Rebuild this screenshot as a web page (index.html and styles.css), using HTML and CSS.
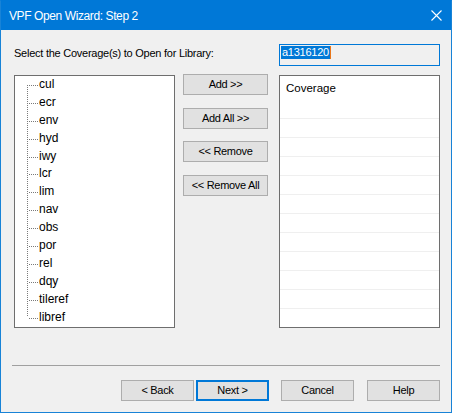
FILE: index.html
```html
<!DOCTYPE html>
<html>
<head>
<meta charset="utf-8">
<link rel="stylesheet" href="styles.css">
</head>
<body>
<div class="window">
  <div class="titlebar">
    <span class="title">VPF Open Wizard: Step 2</span>
    <svg class="close" width="11" height="11" viewBox="0 0 11 11"><path d="M0.5 0.5 L10.5 10.5 M10.5 0.5 L0.5 10.5" stroke="#fff" stroke-width="1.1" fill="none"/></svg>
  </div>
  <div class="content">
    <div class="top-row">
      <span class="label">Select the Coverage(s) to Open for Library:</span>
      <div class="input"><span class="sel">a1316120</span><span class="caret"></span></div>
    </div>
    <div class="main">
      <div class="tree">
        <ul class="tree-list">
          <li>cul</li>
          <li>ecr</li>
          <li>env</li>
          <li>hyd</li>
          <li>iwy</li>
          <li>lcr</li>
          <li>lim</li>
          <li>nav</li>
          <li>obs</li>
          <li>por</li>
          <li>rel</li>
          <li>dqy</li>
          <li>tileref</li>
          <li>libref</li>
        </ul>
      </div>
      <div class="btns">
        <button class="btn">Add &gt;&gt;</button>
        <button class="btn">Add All &gt;&gt;</button>
        <button class="btn">&lt;&lt; Remove</button>
        <button class="btn">&lt;&lt; Remove All</button>
      </div>
      <div class="list">
        <div class="list-head">Coverage</div>
        <div class="row"></div>
        <div class="row"></div>
        <div class="row"></div>
        <div class="row"></div>
        <div class="row"></div>
        <div class="row"></div>
        <div class="row"></div>
        <div class="row"></div>
        <div class="row"></div>
        <div class="row"></div>
        <div class="row"></div>
      </div>
    </div>
    <div class="sep"></div>
    <div class="footer">
      <button class="btn fbtn back">&lt; Back</button>
      <button class="btn fbtn next">Next &gt;</button>
      <button class="btn fbtn cancel">Cancel</button>
      <button class="btn fbtn">Help</button>
    </div>
  </div>
</div>
</body>
</html>
```
FILE: styles.css
```css
body {
  margin: 0;
  background: #ffffff;
  font-family: "Liberation Sans", Arial, sans-serif;
  color: #000;
}

.window {
  width: 452px;
  height: 413px;
  box-sizing: border-box;
  border: 1px solid #1883d7;
  border-top-color: #0078d7;
  background: #f0f0f0;
  display: flex;
  flex-direction: column;
}

.titlebar {
  height: 29px;
  flex: none;
  background: #0078d7;
  color: #fff;
  display: flex;
  align-items: center;
  justify-content: space-between;
  padding: 0 9px 0 8px;
}

.title {
  font-size: 12px;
  letter-spacing: -0.4px;
  line-height: 16px;
  padding-top: 1px;
}

.close {
  display: block;
}

.content {
  flex: 1;
  display: flex;
  flex-direction: column;
  padding: 14px 11px 0 13px;
}

.top-row {
  display: flex;
  justify-content: space-between;
  height: 22px;
}

.label {
  font-size: 11px;
  letter-spacing: -0.25px;
  line-height: 14px;
  padding-top: 2px;
}

.input {
  width: 161px;
  height: 22px;
  box-sizing: border-box;
  border: 1px solid #0078d7;
  background: #f0f0f0;
  padding: 1px 0 0 1px;
  display: flex;
  align-items: flex-start;
}

.sel {
  background: #0078d7;
  color: #fff;
  font-size: 11px;
  letter-spacing: -0.25px;
  line-height: 13px;
  height: 13px;
  padding: 0 1px 0 1px;
}

.caret {
  width: 1px;
  height: 13px;
  background: #e8761a;
}

.main {
  display: grid;
  grid-template-columns: 161px 1fr 161px;
  margin-top: 9px;
  height: 253px;
}

.tree {
  border: 1px solid #6e6e6e;
  background: #fff;
  box-sizing: border-box;
}

.tree-list {
  list-style: none;
  margin: 0;
  padding: 0;
  position: relative;
}

.tree-list::before {
  content: "";
  position: absolute;
  left: 12px;
  top: 9px;
  bottom: 9px;
  width: 1px;
  background: repeating-linear-gradient(to bottom, #7a7a7a 0 1px, transparent 1px 2px);
}

.tree-list li {
  position: relative;
  height: 17.9px;
  line-height: 17.9px;
  padding-left: 24px;
  font-size: 12px;
}

.tree-list li::before {
  content: "";
  position: absolute;
  left: 13px;
  top: 9px;
  width: 10px;
  height: 1px;
  background: repeating-linear-gradient(to right, transparent 0 1px, #7a7a7a 1px 2px);
}

.btns {
  display: flex;
  flex-direction: column;
  gap: 12.67px;
  padding-left: 8px;
  margin-top: -1px;
}

.btn {
  width: 85px;
  height: 21px;
  box-sizing: border-box;
  margin: 0;
  padding: 0;
  background: #e1e1e1;
  border: 1px solid #adadad;
  border-radius: 0;
  font-family: "Liberation Sans", Arial, sans-serif;
  font-size: 11px;
  letter-spacing: -0.3px;
  color: #000;
  line-height: 17px;
}

.list {
  border: 1px solid #6e6e6e;
  background: #fff;
  box-sizing: border-box;
  display: flex;
  flex-direction: column;
}

.list-head {
  height: 42px;
  box-sizing: border-box;
  padding: 4px 0 0 6px;
  font-size: 11.5px;
  line-height: 16px;
}

.row {
  height: 18px;
  border-top: 1px solid #efefef;
}

.sep {
  height: 1px;
  background: #a0a0a0;
  margin: 37px 0 0 -2px;
}

.footer {
  display: flex;
  justify-content: flex-end;
  margin-top: 14px;
}

.fbtn {
  width: 73px;
}

.back {
  margin-right: 2px;
}

.next {
  border: 2px solid #0078d7;
  margin-right: 12px;
}

.cancel {
  margin-right: 13px;
}
```
